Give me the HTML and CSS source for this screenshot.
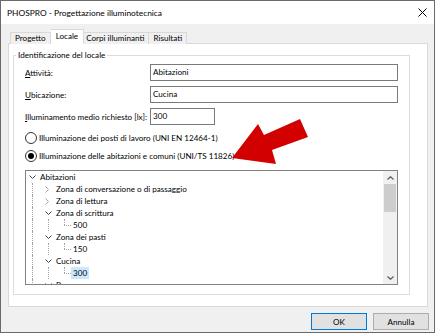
FILE: index.html
```html
<!DOCTYPE html>
<html lang="it">
<head>
    <meta charset="UTF-8">
    <title>PHOSPRO - Progettazione illuminotecnica</title>
    <link rel="stylesheet" href="styles.css">
</head>
<body>
    <div class="window">
        <div class="titlebar">
            <span class="title">PHOSPRO - Progettazione illuminotecnica</span>
            <svg class="close" width="9" height="9" viewBox="0 0 9 9">
                <path d="M0.5 0.5 L8.5 8.5 M8.5 0.5 L0.5 8.5" stroke="#000" stroke-width="1" fill="none"/>
            </svg>
        </div>

        <div class="content">
            <div class="tabs">
                <div class="tab">Progetto</div>
                <div class="tab active">Locale</div>
                <div class="tab">Corpi illuminanti</div>
                <div class="tab">Risultati</div>
            </div>

            <div class="page">
                <fieldset class="group">
                    <legend>Identificazione del locale</legend>

                    <div class="field">
                        <label><u>A</u>ttività:</label>
                        <div class="input wide">Abitazioni</div>
                    </div>
                    <div class="field">
                        <label><u>U</u>bicazione:</label>
                        <div class="input wide">Cucina</div>
                    </div>
                    <div class="field">
                        <label><u>I</u>lluminamento medio richiesto [lx]:</label>
                        <div class="input short">300</div>
                    </div>

                    <div class="radio first"><span class="circle"></span>Illuminazione dei posti di lavoro (UNI EN 12464-1)</div>
                    <div class="radio checked"><span class="circle"></span>Illuminazione delle abitazioni e comuni (UNI/TS 11826)</div>

                    <div class="tree">
                        <div class="tree-items">
                            <div class="row">
                                <span class="exp open"><svg width="7" height="4" viewBox="0 0 7 4"><path d="M0.5 0.5 L3.5 3.5 L6.5 0.5" stroke="#404040" fill="none"/></svg></span>
                                <span class="label">Abitazioni</span>
                            </div>
                            <div class="row">
                                <span class="guide line"></span>
                                <span class="exp"><svg width="4" height="7" viewBox="0 0 4 7"><path d="M0.5 0.5 L3.5 3.5 L0.5 6.5" stroke="#a6a6a6" fill="none"/></svg></span>
                                <span class="label">Zona di conversazione o di passaggio</span>
                            </div>
                            <div class="row">
                                <span class="guide line"></span>
                                <span class="exp"><svg width="4" height="7" viewBox="0 0 4 7"><path d="M0.5 0.5 L3.5 3.5 L0.5 6.5" stroke="#a6a6a6" fill="none"/></svg></span>
                                <span class="label">Zona di lettura</span>
                            </div>
                            <div class="row">
                                <span class="guide line"></span>
                                <span class="exp open"><svg width="7" height="4" viewBox="0 0 7 4"><path d="M0.5 0.5 L3.5 3.5 L6.5 0.5" stroke="#404040" fill="none"/></svg></span>
                                <span class="label">Zona di scrittura</span>
                            </div>
                            <div class="row">
                                <span class="guide line"></span>
                                <span class="guide line"></span>
                                <span class="exp leaf"></span>
                                <span class="label">500</span>
                            </div>
                            <div class="row">
                                <span class="guide line"></span>
                                <span class="exp open"><svg width="7" height="4" viewBox="0 0 7 4"><path d="M0.5 0.5 L3.5 3.5 L6.5 0.5" stroke="#404040" fill="none"/></svg></span>
                                <span class="label">Zona dei pasti</span>
                            </div>
                            <div class="row">
                                <span class="guide line"></span>
                                <span class="guide line"></span>
                                <span class="exp leaf"></span>
                                <span class="label">150</span>
                            </div>
                            <div class="row">
                                <span class="guide line"></span>
                                <span class="exp open"><svg width="7" height="4" viewBox="0 0 7 4"><path d="M0.5 0.5 L3.5 3.5 L6.5 0.5" stroke="#404040" fill="none"/></svg></span>
                                <span class="label">Cucina</span>
                            </div>
                            <div class="row">
                                <span class="guide line"></span>
                                <span class="guide line"></span>
                                <span class="exp leaf"></span>
                                <span class="label selected">300</span>
                            </div>
                            <div class="row">
                                <span class="guide line"></span>
                                <span class="exp open"><svg width="7" height="4" viewBox="0 0 7 4"><path d="M0.5 0.5 L3.5 3.5 L6.5 0.5" stroke="#404040" fill="none"/></svg></span>
                                <span class="label">Bagno</span>
                            </div>
                        </div>
                        <div class="scrollbar">
                            <svg class="sb-arrow" width="7" height="4" viewBox="0 0 7 4"><path d="M0.5 3.5 L3.5 0.8 L6.5 3.5" stroke="#606060" stroke-width="1.3" fill="none"/></svg>
                            <div class="thumb"></div>
                            <div class="track"></div>
                            <svg class="sb-arrow" width="7" height="4" viewBox="0 0 7 4"><path d="M0.5 0.5 L3.5 3.2 L6.5 0.5" stroke="#606060" stroke-width="1.3" fill="none"/></svg>
                        </div>
                    </div>
                </fieldset>
            </div>

            <div class="buttons">
                <button class="btn default">OK</button>
                <button class="btn">Annulla</button>
            </div>
        </div>

        <svg class="arrow" width="435" height="333" viewBox="0 0 435 333">
            <polygon points="232,158 258,124 264,135 300,119 308,137 272,150 276,164" fill="#d20000"/>
        </svg>
    </div>
</body>
</html>
```

FILE: styles.css
```css
body {
    margin: 0;
    font-family: Lato, "Liberation Sans", sans-serif;
    font-size: 8.1px;
    color: #000;
}

.window {
    position: relative;
    width: 435px;
    height: 333px;
    box-sizing: border-box;
    border: 1px solid #6a6a6a;
    background: #f0f0f0;
    display: flex;
    flex-direction: column;
}

.titlebar {
    height: 23px;
    background: #fff;
    display: flex;
    align-items: center;
    justify-content: space-between;
    padding: 0 6px 0 6px;
}

.title {
    font-size: 8.4px;
}

.close {
    margin-right: 1px;
}

.content {
    flex: 1;
    display: flex;
    flex-direction: column;
    padding: 6px 6px 0 7px;
}

/* tabs */
.tabs {
    display: flex;
    align-items: flex-end;
    height: 14px;
    padding-left: 2px;
    margin-bottom: -1px;
    position: relative;
    z-index: 1;
}

.tab {
    height: 11px;
    line-height: 11px;
    padding: 0 4px;
    border: 1px solid #d9d9d9;
    border-bottom: none;
    border-left: none;
    background: #f0f0f0;
}

.tab:first-child {
    border-left: 1px solid #d9d9d9;
}

.tab.active {
    height: 14px;
    line-height: 13px;
    margin: 0 -2px 0 0;
    padding: 0 5px;
    background: #fff;
    border-left: none;
    position: relative;
}

.page {
    background: #fff;
    border: 1px solid #d9d9d9;
    padding: 5px 17px 11px 4px;
}

/* group box */
.group {
    margin: 0;
    border: 1px solid #dcdcdc;
    padding: 1px 11px 9px 11px;
}

.group legend {
    padding: 0 2px;
    margin-left: -9px;
    line-height: 12px;
}

.field {
    display: flex;
    align-items: center;
    height: 17px;
    margin-top: 2px;
}

.field + .field {
    margin-top: 5px;
}

.field label {
    width: 125px;
    white-space: nowrap;
}

.input {
    box-sizing: border-box;
    height: 17px;
    border: 1px solid #7a7a7a;
    padding: 1px 2px;
    line-height: 12px;
}

.input.wide {
    flex: 1;
}

.input.short {
    width: 65px;
}

.radio {
    display: flex;
    align-items: center;
    height: 12px;
    margin-top: 6px;
}

.radio.first {
    margin-top: 7px;
}

.circle {
    box-sizing: border-box;
    width: 12px;
    height: 12px;
    border: 1px solid #333;
    border-radius: 50%;
    margin-right: 2px;
    display: flex;
    align-items: center;
    justify-content: center;
}

.radio.checked .circle::after {
    content: "";
    width: 6px;
    height: 6px;
    border-radius: 50%;
    background: #000;
}

/* tree */
.tree {
    display: flex;
    height: 115px;
    box-sizing: border-box;
    margin-top: 8px;
    border: 1px solid #828282;
    background: #fff;
}

.tree-items {
    flex: 1;
    overflow: hidden;
    padding-top: 0;
}

.row {
    display: flex;
    align-items: center;
    height: 12px;
    line-height: 12px;
}

.guide {
    width: 16px;
    height: 12px;
    position: relative;
    flex-shrink: 0;
}

.guide.line::before {
    content: "";
    position: absolute;
    left: 6px;
    top: 0;
    bottom: 0;
    border-left: 1px dotted #a0a0a0;
}

.exp {
    width: 12px;
    height: 12px;
    flex-shrink: 0;
    display: flex;
    align-items: center;
    padding-left: 3px;
    box-sizing: border-box;
    position: relative;
}

.exp svg {
    display: block;
}

.exp.leaf {
    width: 13px;
}

.exp.leaf::before {
    content: "";
    position: absolute;
    left: 6px;
    top: 0;
    height: 6px;
    border-left: 1px dotted #a0a0a0;
}

.exp.leaf::after {
    content: "";
    position: absolute;
    left: 6px;
    top: 6px;
    width: 7px;
    border-top: 1px dotted #a0a0a0;
}

.label {
    padding: 0 2px;
    white-space: nowrap;
}

.label.selected {
    background: #cce8ff;
}

.scrollbar {
    width: 14px;
    background: #f0f0f0;
    display: flex;
    flex-direction: column;
    align-items: center;
}

.sb-arrow {
    margin: 5px 0 4px;
}

.thumb {
    width: 12px;
    height: 28px;
    background: #cdcdcd;
}

.track {
    flex: 1;
}

/* buttons */
.buttons {
    display: flex;
    justify-content: flex-end;
    gap: 6px;
    margin-top: 6px;
    margin-right: -1px;
}

.btn {
    width: 56px;
    height: 17px;
    padding: 0;
    font-family: inherit;
    font-size: 8.1px;
    background: #e1e1e1;
    border: 1px solid #adadad;
    color: #000;
}

.btn.default {
    border-color: #0078d7;
}

.arrow {
    position: absolute;
    left: -1px;
    top: -1px;
    pointer-events: none;
}
```
